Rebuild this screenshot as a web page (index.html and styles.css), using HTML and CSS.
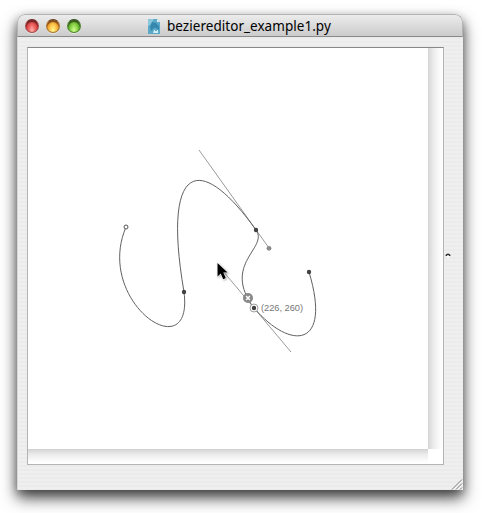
FILE: index.html
```html
<!DOCTYPE html>
<html lang="en">
<head>
<meta charset="utf-8">
<title>beziereditor_example1.py</title>
<link rel="stylesheet" href="styles.css">
</head>
<body>
<main class="window">
  <header class="titlebar">
    <div class="lights">
      <span class="light red"></span>
      <span class="light amber"></span>
      <span class="light green"></span>
    </div>
    <svg class="doc" viewBox="0 0 12 15">
      <path d="M0 0H9L12 3V15H0Z" fill="#5aa9c8"/>
      <path d="M0 0H6L2 6L0 7Z" fill="#8ac7dc"/>
      <path d="M9 0L12 3H9Z" fill="#dceff5"/>
      <path d="M4 3L8 4L11 7V11L8 9L6 9L3 12L2 8Z" fill="#3587ad"/>
      <path d="M5 14L6 11H7V12H9V11H10V14Z" fill="#d4edf4"/>
    </svg>
    <h1 class="title">beziereditor_example1.py</h1>
  </header>
  <div class="content">
    <div class="view">
      <svg class="canvas" viewBox="28 48 400 401">
        <g class="handles">
          <path d="M199 150L269 248M217 264L291 352"/>
        </g>
        <path class="curve" d="M126 227C94 302 194 370 184 292C162 164 199 150 256 230C269 248 221 264 254 308C291 351 332 348 309 272"/>
        <circle class="start" cx="126" cy="227" r="2"/>
        <circle class="point" cx="184" cy="292" r="2.2"/>
        <circle class="point" cx="256" cy="230" r="2.2"/>
        <circle class="point" cx="309" cy="272" r="2.2"/>
        <circle class="control" cx="269" cy="248.3" r="2.4"/>
        <circle class="ring" cx="254" cy="308" r="4"/>
        <circle class="point" cx="254" cy="308" r="2.2"/>
        <circle class="remove" cx="248" cy="298" r="5"/>
        <path class="cross" d="M246.1 296.1L249.9 299.9M249.9 296.1L246.1 299.9"/>
        <text class="coords" x="261" y="311.3" textLength="42">(226, 260)</text>
        <path class="cursor" d="M217.5 263V276.5L220.7 273.6L223.2 279.3L225.8 278.1L223.3 272.6H227.6Z"/>
      </svg>
      <div class="edge-right"></div>
      <div class="edge-bottom"></div>
      <div class="corner"></div>
    </div>
    <svg class="knob" viewBox="0 0 6 5"><path d="M.5 3V2.2Q1 .6 3 .6T5.5 2.2V3H4V2.2H2V3Z" fill="#333"/><path d="M2 3H4V5H2Z" fill="#fff"/></svg>
    <svg class="grip" viewBox="0 0 12 12"><path d="M1 11.5L11 1.5M5 11.5L11 5.5M9 11.5L11 9.5" stroke="#777"/><path d="M2.2 11.7L11.2 2.7M6.2 11.7L11.2 6.7" stroke="#fff" stroke-width=".6"/></svg>
  </div>
</main>
</body>
</html>
```
FILE: styles.css
```css
body {
  margin: 0;
  padding: 14px 19px 23px 17px;
  height: 476px;
  overflow: hidden;
  background: #fff;
}
.window {
  display: flex;
  flex-direction: column;
  width: 446px;
  height: 476px;
  border-radius: 8px 8px 0 0;
  overflow: hidden;
  box-shadow: 0 8px 16px rgba(0, 0, 0, .68), 0 4px 10px rgba(0, 0, 0, .3);
}
.titlebar {
  box-sizing: border-box;
  display: flex;
  align-items: center;
  height: 23px;
  padding: 1px 8px 0 7px;
  border: 1px solid #b4b4b4;
  border-bottom-color: #898989;
  border-radius: 8px 8px 0 0;
  background: linear-gradient(#ececec, #cbcbcb);
}
.lights {
  display: flex;
  gap: 7px;
  margin-right: 67px;
}
.light {
  box-sizing: border-box;
  width: 14px;
  height: 14px;
  border: 1px solid;
  border-radius: 50%;
  box-shadow: inset 0 2px 1px rgba(40, 20, 20, .6), 0 1px 0 rgba(255, 255, 255, .5);
}
.red {
  border-color: #6b2424 #a34a4a #a34a4a;
  background: radial-gradient(ellipse at 50% 85%, #ffb3ad 0, #ec6260 40%, #c92d30 80%);
}
.amber {
  border-color: #673e1d #a87732 #a87732;
  background: radial-gradient(ellipse at 50% 85%, #fff990 0, #fcc044 45%, #e87a1a 85%);
}
.green {
  border-color: #284e18 #4d8430 #4d8430;
  background: radial-gradient(ellipse at 50% 85%, #d2ff91 0, #83cf40 45%, #3f951d 85%);
}
.doc {
  width: 12px;
  height: 15px;
  margin-right: 7px;
}
.title {
  margin: 0;
  font: 400 13.5px/20px "Noto Sans", sans-serif;
  letter-spacing: .04px;
  white-space: nowrap;
  color: #000;
}
.content {
  box-sizing: border-box;
  position: relative;
  flex: 1;
  padding: 10px 10px 10px 9px;
  border-left: 1px solid #d8d8d8;
  background: repeating-linear-gradient(#ebebeb 0 2px, #efefef 2px 4px);
}
.view {
  display: grid;
  grid-template: 401px 15px / 400px 15px;
  box-sizing: border-box;
  width: 417px;
  height: 418px;
  border: 1px solid #b4b4b4;
  border-top-color: #888;
  background: #fff;
}
.canvas {
  width: 400px;
  height: 401px;
}
.edge-right {
  background: linear-gradient(90deg, #d5d5d5, #ebebeb 35%, #fafafa 75%, #fff);
}
.edge-bottom {
  background: linear-gradient(#d2d2d2, #ebebeb 35%, #fafafa 75%, #fff);
}
.corner {
  background: #fff;
}
.handles {
  fill: none;
  stroke: #9a9a9a;
  stroke-width: 1;
}
.curve {
  fill: none;
  stroke: #606060;
  stroke-width: 1;
}
.start {
  fill: #fff;
  stroke: #555;
}
.point {
  fill: #414141;
}
.control {
  fill: #8b8b8b;
}
.ring {
  fill: #fff;
  stroke: #888;
  stroke-width: .8;
}
.remove {
  fill: #888;
}
.cross {
  stroke: #fff;
  stroke-width: 1.4;
}
.coords {
  font: 9.3px "Liberation Sans", sans-serif;
  fill: #777;
}
.cursor {
  fill: #000;
  stroke: #fff;
  stroke-width: 1;
  paint-order: stroke;
  filter: drop-shadow(1px 1px 1px rgba(0, 0, 0, .3));
}
.knob {
  position: absolute;
  left: 427px;
  top: 216px;
  width: 6px;
  height: 5px;
}
.grip {
  position: absolute;
  right: 0;
  bottom: 0;
  width: 12px;
  height: 12px;
}
```
